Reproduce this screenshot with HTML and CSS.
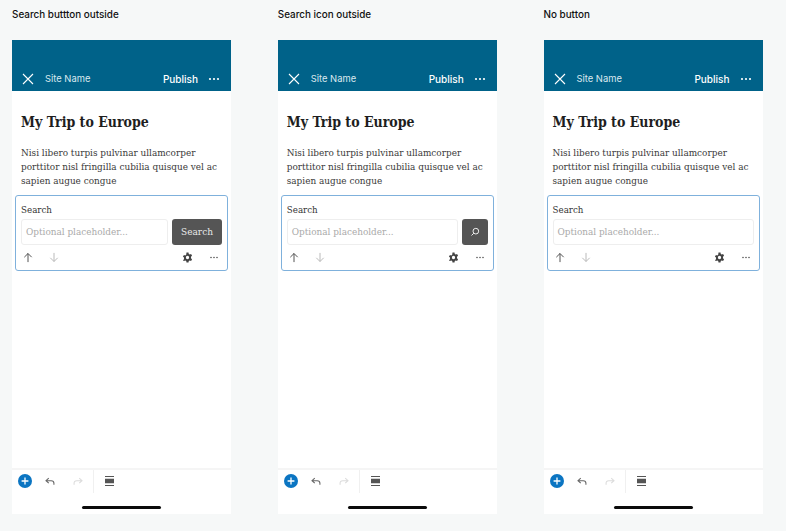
FILE: index.html
```html
<!DOCTYPE html>
<html lang="en">
<head>
<meta charset="utf-8">
<title>Search block variations</title>
<link rel="stylesheet" href="styles.css">
</head>
<body>
<svg class="defs" width="0" height="0" aria-hidden="true">
  <symbol id="i-close" viewBox="0 0 12 12"><path d="M1 1l10 10M11 1L1 11" fill="none" stroke="currentColor" stroke-width="1.100"/></symbol>
  <symbol id="i-dots" viewBox="0 0 12 4"><circle cx="2" cy="2" r="1.100" fill="currentColor"/><circle cx="6" cy="2" r="1.100" fill="currentColor"/><circle cx="10" cy="2" r="1.100" fill="currentColor"/></symbol>
  <symbol id="i-up" viewBox="0 0 12 12"><path d="M6 11.500V1.200M1.600 5.600L6 1.200l4.400 4.400" fill="none" stroke="currentColor" stroke-width="1.100"/></symbol>
  <symbol id="i-down" viewBox="0 0 12 12"><path d="M6 .5v10.300M1.600 6.400L6 10.800l4.400-4.400" fill="none" stroke="currentColor" stroke-width="1.100"/></symbol>
  <symbol id="i-gear" viewBox="0 0 12 12"><path fill="currentColor" fill-rule="evenodd" d="M4.900.6h2.200l.3 1.500 1 .6 1.500-.5 1.100 1.900-1.200 1v1.800l1.200 1-1.100 1.900-1.500-.5-1 .6-.3 1.500H4.900l-.3-1.500-1-.6-1.500.5L1 8.900l1.200-1V6.100L1 5.100 2.100 3.200l1.500.5 1-.6zM6 4.200a1.800 1.800 0 1 0 0 3.600 1.800 1.800 0 0 0 0-3.600z"/></symbol>
  <symbol id="i-search" viewBox="0 0 12 12"><circle cx="7" cy="5" r="3.400" fill="none" stroke="currentColor" stroke-width="1.200"/><path d="M4.600 7.400L1.800 10.200" stroke="currentColor" stroke-width="1.200"/></symbol>
  <symbol id="i-plus" viewBox="0 0 14 14"><circle cx="7" cy="7" r="7" fill="#0b75c2"/><path d="M7 3.600v6.800M3.600 7h6.800" stroke="#fff" stroke-width="1.300"/></symbol>
  <symbol id="i-undo" viewBox="0 0 12 10"><path d="M4.500 1L1.200 4l3.300 3M1.200 4h6.300c1.900 0 3.200 1.200 3.200 3v2" fill="none" stroke="currentColor" stroke-width="1.300"/></symbol>
  <symbol id="i-redo" viewBox="0 0 12 10"><path d="M7.500 1l3.300 3-3.300 3M10.800 4H4.500C2.600 4 1.300 5.200 1.300 7v2" fill="none" stroke="currentColor" stroke-width="1.300"/></symbol>
  <symbol id="i-group" viewBox="0 0 10 11"><path fill="currentColor" d="M0 0h10v1H0zM0 3h10v5H0zM0 10h10v1H0z"/></symbol>
</svg>

<main class="board">
  <section class="variant">
    <h2 class="variant-title">Search buttton outside</h2>
    <div class="phone">
      <header class="appbar">
        <svg class="i-close"><use href="#i-close"/></svg>
        <span class="site">Site Name</span>
        <span class="publish">Publish</span>
        <svg class="i-more"><use href="#i-dots"/></svg>
      </header>
      <div class="content">
        <h1 class="post-title">My Trip to Europe</h1>
        <p class="post-text">Nisi libero turpis pulvinar ullamcorper porttitor nisl fringilla cubilia quisque vel ac sapien augue congue</p>
      </div>
      <div class="block">
        <div class="block-label">Search</div>
        <div class="search-row">
          <div class="field">Optional placeholder...</div>
          <div class="btn btn-text">Search</div>
        </div>
        <div class="block-tools">
          <svg class="tool tool-up"><use href="#i-up"/></svg>
          <svg class="tool tool-down"><use href="#i-down"/></svg>
          <svg class="tool tool-gear"><use href="#i-gear"/></svg>
          <svg class="tool-dots"><use href="#i-dots"/></svg>
        </div>
      </div>
      <footer class="bottom">
        <div class="bottom-bar">
          <svg class="b-plus"><use href="#i-plus"/></svg>
          <svg class="b-undo"><use href="#i-undo"/></svg>
          <svg class="b-redo"><use href="#i-redo"/></svg>
          <span class="b-sep"></span>
          <svg class="b-group"><use href="#i-group"/></svg>
        </div>
        <div class="home"></div>
      </footer>
    </div>
  </section>

  <section class="variant">
    <h2 class="variant-title">Search icon outside</h2>
    <div class="phone">
      <header class="appbar">
        <svg class="i-close"><use href="#i-close"/></svg>
        <span class="site">Site Name</span>
        <span class="publish">Publish</span>
        <svg class="i-more"><use href="#i-dots"/></svg>
      </header>
      <div class="content">
        <h1 class="post-title">My Trip to Europe</h1>
        <p class="post-text">Nisi libero turpis pulvinar ullamcorper porttitor nisl fringilla cubilia quisque vel ac sapien augue congue</p>
      </div>
      <div class="block">
        <div class="block-label">Search</div>
        <div class="search-row">
          <div class="field">Optional placeholder...</div>
          <div class="btn btn-icon"><svg class="i-search"><use href="#i-search"/></svg></div>
        </div>
        <div class="block-tools">
          <svg class="tool tool-up"><use href="#i-up"/></svg>
          <svg class="tool tool-down"><use href="#i-down"/></svg>
          <svg class="tool tool-gear"><use href="#i-gear"/></svg>
          <svg class="tool-dots"><use href="#i-dots"/></svg>
        </div>
      </div>
      <footer class="bottom">
        <div class="bottom-bar">
          <svg class="b-plus"><use href="#i-plus"/></svg>
          <svg class="b-undo"><use href="#i-undo"/></svg>
          <svg class="b-redo"><use href="#i-redo"/></svg>
          <span class="b-sep"></span>
          <svg class="b-group"><use href="#i-group"/></svg>
        </div>
        <div class="home"></div>
      </footer>
    </div>
  </section>

  <section class="variant">
    <h2 class="variant-title">No button</h2>
    <div class="phone">
      <header class="appbar">
        <svg class="i-close"><use href="#i-close"/></svg>
        <span class="site">Site Name</span>
        <span class="publish">Publish</span>
        <svg class="i-more"><use href="#i-dots"/></svg>
      </header>
      <div class="content">
        <h1 class="post-title">My Trip to Europe</h1>
        <p class="post-text">Nisi libero turpis pulvinar ullamcorper porttitor nisl fringilla cubilia quisque vel ac sapien augue congue</p>
      </div>
      <div class="block">
        <div class="block-label">Search</div>
        <div class="search-row">
          <div class="field">Optional placeholder...</div>
        </div>
        <div class="block-tools">
          <svg class="tool tool-up"><use href="#i-up"/></svg>
          <svg class="tool tool-down"><use href="#i-down"/></svg>
          <svg class="tool tool-gear"><use href="#i-gear"/></svg>
          <svg class="tool-dots"><use href="#i-dots"/></svg>
        </div>
      </div>
      <footer class="bottom">
        <div class="bottom-bar">
          <svg class="b-plus"><use href="#i-plus"/></svg>
          <svg class="b-undo"><use href="#i-undo"/></svg>
          <svg class="b-redo"><use href="#i-redo"/></svg>
          <span class="b-sep"></span>
          <svg class="b-group"><use href="#i-group"/></svg>
        </div>
        <div class="home"></div>
      </footer>
    </div>
  </section>
</main>
</body>
</html>
```
FILE: styles.css
```css
* { box-sizing: border-box; }
html, body { margin: 0; height: 100%; }
body {
  background: #f6f8f8;
  overflow: hidden;
  font-family: "DejaVu Serif Condensed", "DejaVu Serif", serif;
}
.defs { display: block; height: 0; }
.board { display: flex; gap: 46.75px; padding: 8px 0 0 12px; }
.variant { width: 219px; flex: none; }
.variant-title {
  margin: 0 0 17px;
  height: 15px;
  font: 500 9.9px/13px Inter, "Liberation Sans", sans-serif;
  color: #111;
}
.phone {
  height: 474px;
  background: #fff;
  display: flex;
  flex-direction: column;
}
.appbar {
  height: 51px;
  background: #006289;
  color: #fff;
  display: flex;
  align-items: center;
  padding: 26px 11px 0 10px;
  flex: none;
}
.i-close { width: 12px; height: 12px; margin-right: 11px; color: #fff; }
.site { font: 400 9.4px/12px Inter, "Liberation Sans", sans-serif; color: #dbe9ef; }
.publish { margin-left: auto; font: 500 10px/12px Inter, "Liberation Sans", sans-serif; }
.i-more { width: 12px; height: 4px; margin-left: 10px; color: #fff; }
.content { padding: 22px 9px 0; flex: none; }
.post-title {
  margin: 0;
  font: 700 14px/18px "DejaVu Serif Condensed", "DejaVu Serif", serif;
  color: #1e1e1e;
}
.post-text {
  margin: 15px 0 0;
  font: 400 9.9px/14px "DejaVu Serif Condensed", "DejaVu Serif", serif;
  color: #3a3a3a;
}
.block {
  margin: 7px 3px 0;
  height: 76px;
  border: 1px solid #7fb1dc;
  border-radius: 3px;
  padding: 8px 5px 0;
  flex: none;
}
.block-label { font: 400 9.7px/12px "DejaVu Serif Condensed", "DejaVu Serif", serif; color: #333; height: 15px; }
.search-row { display: flex; gap: 4px; height: 26px; }
.field {
  flex: 1;
  border: 1px solid #eeeeee;
  border-radius: 3px;
  padding: 0 4px;
  font: 400 9.9px/24px "DejaVu Serif Condensed", "DejaVu Serif", serif;
  color: #aaa;
  white-space: nowrap;
}
.btn {
  background: #555;
  border-radius: 3px;
  color: #e8e8e8;
  display: flex;
  align-items: center;
  justify-content: center;
  flex: none;
}
.btn-text { width: 50px; font: 400 10px/12px "DejaVu Serif Condensed", "DejaVu Serif", serif; }
.btn-icon { width: 26px; }
.i-search { width: 10px; height: 10px; color: #eee; }
.block-tools { display: flex; align-items: center; height: 24px; padding: 0 3px 0 2px; }
.tool { width: 10px; height: 11px; color: #444; }
.tool-down { margin-left: 16px; color: #b4b4b4; }
.tool-gear { margin-left: auto; width: 11px; height: 11px; color: #444; }
.tool-dots { width: 10px; height: 3px; margin-left: 16px; color: #555; }
.bottom { margin-top: auto; flex: none; }
.bottom-bar {
  height: 28px;
  border-top: 2px solid #f5f5f5;
  display: flex;
  align-items: center;
  padding: 0 0 4px 6px;
}
.b-plus { width: 14px; height: 14px; }
.b-undo { width: 10px; height: 9px; margin-left: 13px; color: #666; }
.b-redo { width: 10px; height: 9px; margin-left: 18px; color: #dcdcdc; }
.b-sep { width: 1px; align-self: stretch; background: #f0f0f0; margin-left: 10px; margin-bottom: -1px; }
.b-group { width: 9px; height: 10px; margin-left: 11px; color: #555; }
.home { width: 79px; height: 3px; background: #0b0b0b; border-radius: 2px; margin: 10px 0 5px 70px; }
```
